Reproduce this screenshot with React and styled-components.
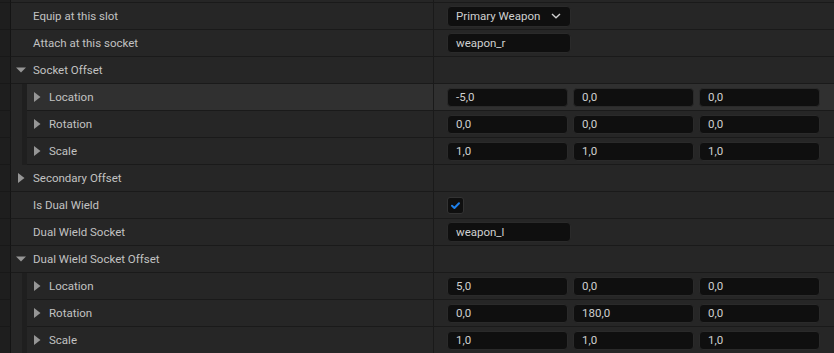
import React from "react";
import styled, { createGlobalStyle } from "styled-components";

const GlobalStyle = createGlobalStyle`
  html, body {
    margin: 0;
    padding: 0;
    background: #1a1a1a;
    overflow: hidden;
  }
  body {
    font-family: Roboto, "Liberation Sans", sans-serif;
    font-size: 11.5px;
  }
`;

const Panel = styled.div`
  display: flex;
  flex-direction: column;
  width: 834px;
`;

const Row = styled.div`
  display: flex;
  height: 27px;
  flex-shrink: 0;
  margin-top: ${p => (p.$offset ? `-${p.$offset}px` : "0")};
`;

const Gutter = styled.div`
  width: 10px;
  background: #1e1e1e;
  border-right: 1px solid #141414;
  border-bottom: 1px solid #181818;
`;

const Indent = styled.div`
  width: 11px;
  background: #262626;
  border-right: 5px solid #1f1f1f;
`;

const Body = styled.div`
  flex: 1;
  display: flex;
  background: ${p => (p.$hover ? "#303030" : "#262626")};
  border-bottom: 1px solid #1a1a1a;
`;

const Name = styled.div`
  flex: 1;
  display: flex;
  align-items: center;
  padding-left: 5px;
  padding-bottom: 1px;
  color: #c2c2c2;
  white-space: nowrap;
`;

const ArrowSlot = styled.span`
  width: 12px;
  height: 12px;
  margin-right: 5px;
  display: flex;
  align-items: center;
  justify-content: flex-start;
`;

const Value = styled.div`
  width: 401px;
  padding: 0 14px 0 13px;
  border-left: 1px solid #1a1a1a;
  display: flex;
  align-items: center;
  gap: 5px;
  box-sizing: border-box;
`;

const Field = styled.div`
  box-sizing: border-box;
  height: ${p => p.$h || 20}px;
  width: ${p => (p.$w ? `${p.$w}px` : "auto")};
  flex: ${p => (p.$w ? "0 0 auto" : "1")};
  background: #0f0f0f;
  border: 1px solid #2a2a2a;
  border-radius: 4px;
  padding: 0 8px;
  display: flex;
  align-items: center;
  justify-content: space-between;
  color: #d0d0d0;
  font-size: 11.5px;
`;

const CheckBox = styled.div`
  box-sizing: border-box;
  width: 17px;
  height: 17px;
  background: #0f0f0f;
  border: 1px solid #333;
  border-radius: 3px;
  display: flex;
  align-items: center;
  justify-content: center;
`;

const Arrow = ({ open }) => (
  <svg width="12" height="12" viewBox="0 0 12 12">
    {open ? (
      <polygon points="0,3.5 10,3.5 5,8.5" fill="#969696" />
    ) : (
      <polygon points="2,1 8.5,6 2,11" fill="#969696" />
    )}
  </svg>
);

const Chevron = () => (
  <svg width="12" height="8" viewBox="0 0 12 8">
    <polyline points="2,2 6,5.8 10,2" fill="none" stroke="#cfcfcf" strokeWidth="1.4" />
  </svg>
);

const Check = () => (
  <svg width="11" height="9" viewBox="0 0 11 9">
    <polyline points="2,4.8 4.4,7 9,2.2" fill="none" stroke="#1f80ea" strokeWidth="2" strokeLinecap="round" strokeLinejoin="round" />
  </svg>
);

const rows = [
  { label: "Equip at this slot", kind: "select", value: "Primary Weapon" },
  { label: "Attach at this socket", kind: "text", value: "weapon_r" },
  { label: "Socket Offset", expand: "open" },
  { label: "Location", nested: true, expand: "closed", hover: true, kind: "vector", value: ["-5,0", "0,0", "0,0"] },
  { label: "Rotation", nested: true, expand: "closed", kind: "vector", value: ["0,0", "0,0", "0,0"] },
  { label: "Scale", nested: true, expand: "closed", kind: "vector", value: ["1,0", "1,0", "1,0"] },
  { label: "Secondary Offset", expand: "closed" },
  { label: "Is Dual Wield", kind: "check" },
  { label: "Dual Wield Socket", kind: "text", value: "weapon_l" },
  { label: "Dual Wield Socket Offset", expand: "open" },
  { label: "Location", nested: true, expand: "closed", kind: "vector", value: ["5,0", "0,0", "0,0"] },
  { label: "Rotation", nested: true, expand: "closed", kind: "vector", value: ["0,0", "180,0", "0,0"] },
  { label: "Scale", nested: true, expand: "closed", kind: "vector", value: ["1,0", "1,0", "1,0"] },
];

const renderValue = row => {
  switch (row.kind) {
    case "select":
      return (
        <Field $w={124} $h={21}>
          {row.value}
          <Chevron />
        </Field>
      );
    case "text":
      return <Field $w={124}>{row.value}</Field>;
    case "vector":
      return row.value.map((v, i) => (
        <Field key={i} $h={19}>
          {v}
        </Field>
      ));
    case "check":
      return (
        <CheckBox>
          <Check />
        </CheckBox>
      );
    default:
      return null;
  }
};

const PropertyRow = ({ row }) => (
  <Row>
    <Gutter />
    {row.nested && <Indent />}
    <Body $hover={row.hover}>
      <Name>
        <ArrowSlot>{row.expand && <Arrow open={row.expand === "open"} />}</ArrowSlot>
        {row.label}
      </Name>
      <Value>{renderValue(row)}</Value>
    </Body>
  </Row>
);

export default function App() {
  return (
    <>
      <GlobalStyle />
      <Panel>
        <Row $offset={24}>
          <Gutter />
          <Body>
            <Name />
            <Value>
              <Field $w={50} />
            </Value>
          </Body>
        </Row>
        {rows.map((row, i) => (
          <PropertyRow key={i} row={row} />
        ))}
      </Panel>
    </>
  );
}
